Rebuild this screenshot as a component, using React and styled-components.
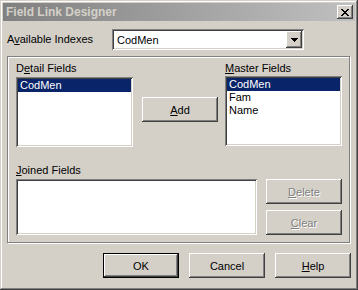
import React from 'react';
import styled, { createGlobalStyle } from 'styled-components';

const GlobalStyle = createGlobalStyle`
  html, body {
    margin: 0;
    padding: 0;
    background: #d4d0c8;
  }
  body {
    font-family: "Liberation Sans", Arial, sans-serif;
    font-size: 11px;
    color: #000;
  }
  u {
    text-decoration: underline;
    text-underline-offset: 1px;
  }
`;

const raised = `
  box-shadow: inset -1px -1px #404040, inset 1px 1px #ffffff,
    inset -2px -2px #808080, inset 2px 2px #d4d0c8;
`;

const sunken = `
  box-shadow: inset 1px 1px #808080, inset -1px -1px #ffffff,
    inset 2px 2px #404040, inset -2px -2px #d4d0c8;
`;

const Window = styled.div`
  width: 358px;
  height: 290px;
  box-sizing: border-box;
  padding: 3px;
  background: #d4d0c8;
  display: flex;
  flex-direction: column;
  box-shadow: inset -1px -1px #404040, inset 1px 1px #d4d0c8,
    inset -2px -2px #808080, inset 2px 2px #ffffff;
`;

const TitleBar = styled.div`
  height: 18px;
  flex: none;
  display: flex;
  align-items: center;
  justify-content: space-between;
  padding: 0 2px 0 3px;
  background: linear-gradient(to right, #808080, #c0c0c0);
`;

const Title = styled.span`
  font-weight: bold;
  font-size: 12px;
  color: #d4d0c8;
`;

const CloseButton = styled.div`
  width: 16px;
  height: 14px;
  background: #d4d0c8;
  display: flex;
  align-items: center;
  justify-content: center;
  ${raised}
`;

const Body = styled.div`
  flex: 1;
  padding: 0 4px 0 4px;
  display: flex;
  flex-direction: column;
`;

const IndexRow = styled.div`
  margin-top: 8px;
  height: 21px;
  display: flex;
  align-items: center;
`;

const Label = styled.div`
  line-height: 13px;
  white-space: nowrap;
  width: ${(p) => (p.$width ? `${p.$width}px` : 'auto')};
  margin-bottom: ${(p) => (p.$gap ? `${p.$gap}px` : '0')};
`;

const Combo = styled.div`
  width: 192px;
  height: 21px;
  box-sizing: border-box;
  background: #fff;
  display: flex;
  align-items: center;
  justify-content: space-between;
  padding: 2px 2px 2px 5px;
  ${sunken}
`;

const ComboButton = styled.div`
  width: 16px;
  height: 17px;
  background: #d4d0c8;
  display: flex;
  align-items: center;
  justify-content: center;
  ${raised}
`;

const Panel = styled.div`
  margin-top: 6px;
  width: 343px;
  height: 187px;
  box-sizing: border-box;
  border: 1px solid #808080;
  box-shadow: inset 1px 1px #ffffff, 1px 1px #ffffff;
  padding: 5px 6px 7px 8px;
  display: flex;
  flex-direction: column;
`;

const TopRow = styled.div`
  display: flex;
  align-items: flex-start;
`;

const Column = styled.div`
  display: flex;
  flex-direction: column;
  width: ${(p) => p.$width}px;
`;

const ListBox = styled.div`
  width: ${(p) => p.$width}px;
  height: ${(p) => p.$height}px;
  box-sizing: border-box;
  background: #fff;
  padding: 2px;
  ${sunken}
`;

const ListItem = styled.div`
  height: 13px;
  line-height: 13px;
  padding-left: 2px;
  white-space: nowrap;
  background: ${(p) => (p.$selected ? '#0a246a' : 'transparent')};
  color: ${(p) => (p.$selected ? '#fff' : '#000')};
`;

const BottomRow = styled.div`
  margin-top: 17px;
  display: flex;
  align-items: flex-end;
`;

const SideButtons = styled.div`
  margin-left: 9px;
  display: flex;
  flex-direction: column;
  gap: 6px;
`;

const Button = styled.div`
  width: 76px;
  height: 25px;
  box-sizing: border-box;
  display: flex;
  align-items: center;
  justify-content: center;
  background: #d4d0c8;
  margin: ${(p) => p.$margin || '0'};
  color: ${(p) => (p.$disabled ? '#808080' : '#000')};
  text-shadow: ${(p) => (p.$disabled ? '1px 1px #ffffff' : 'none')};
  border: ${(p) => (p.$default ? '1px solid #000' : 'none')};
  ${raised}
`;

const ButtonRow = styled.div`
  margin-top: 10px;
  display: flex;
  justify-content: flex-end;
  gap: 10px;
`;

const pixels = (rows) =>
  rows.flatMap((row, y) =>
    row.split('').map((c, x) =>
      c === '#' ? <rect key={`${x}-${y}`} x={x} y={y} width="1" height="1" /> : null
    )
  );

const CloseGlyph = () => (
  <svg width="8" height="7" viewBox="0 0 8 7" fill="#000" shapeRendering="crispEdges">
    {pixels(['##....##', '.##..##.', '..####..', '...##...', '..####..', '.##..##.', '##....##'])}
  </svg>
);

const ArrowGlyph = () => (
  <svg width="7" height="4" viewBox="0 0 7 4" fill="#000" shapeRendering="crispEdges">
    {pixels(['#######', '.#####.', '..###..', '...#...'])}
  </svg>
);

export default function App() {
  return (
    <>
      <GlobalStyle />
      <Window>
        <TitleBar>
          <Title>Field Link Designer</Title>
          <CloseButton>
            <CloseGlyph />
          </CloseButton>
        </TitleBar>
        <Body>
          <IndexRow>
            <Label $width={105}>
              A<u>v</u>ailable Indexes
            </Label>
            <Combo>
              <span>CodMen</span>
              <ComboButton>
                <ArrowGlyph />
              </ComboButton>
            </Combo>
          </IndexRow>

          <Panel>
            <TopRow>
              <Column $width={117}>
                <Label $gap={2}>
                  D<u>e</u>tail Fields
                </Label>
                <ListBox $width={117} $height={70}>
                  <ListItem $selected>CodMen</ListItem>
                </ListBox>
              </Column>
              <Button $margin="35px 0 0 9px">
                <span>
                  <u>A</u>dd
                </span>
              </Button>
              <Column $width={117} style={{ marginLeft: 7 }}>
                <Label $gap={1}>
                  <u>M</u>aster Fields
                </Label>
                <ListBox $width={117} $height={70}>
                  <ListItem $selected>CodMen</ListItem>
                  <ListItem>Fam</ListItem>
                  <ListItem>Name</ListItem>
                </ListBox>
              </Column>
            </TopRow>

            <BottomRow>
              <Column $width={241}>
                <Label $gap={2}>
                  <u>J</u>oined Fields
                </Label>
                <ListBox $width={241} $height={56} />
              </Column>
              <SideButtons>
                <Button $disabled>
                  <span>
                    <u>D</u>elete
                  </span>
                </Button>
                <Button $disabled>
                  <span>
                    <u>C</u>lear
                  </span>
                </Button>
              </SideButtons>
            </BottomRow>
          </Panel>

          <ButtonRow>
            <Button $default>OK</Button>
            <Button>Cancel</Button>
            <Button>
              <span>
                <u>H</u>elp
              </span>
            </Button>
          </ButtonRow>
        </Body>
      </Window>
    </>
  );
}
